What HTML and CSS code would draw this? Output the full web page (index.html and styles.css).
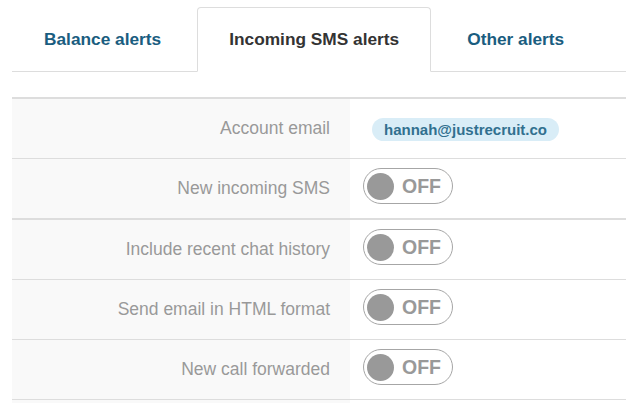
FILE: index.html
```html
<!DOCTYPE html>
<html>
<head>
<meta charset="utf-8">
<link rel="stylesheet" href="styles.css">
</head>
<body>
<div class="page">
  <ul class="tabs">
    <li class="tab"><a>Balance alerts</a></li>
    <li class="tab active"><a>Incoming SMS alerts</a></li>
    <li class="tab"><a>Other alerts</a></li>
  </ul>
  <table class="settings">
    <tbody>
      <tr>
        <th>Account email</th>
        <td><span class="badge">hannah@justrecruit.co</span></td>
      </tr>
      <tr>
        <th>New incoming SMS</th>
        <td><div class="toggle"><span class="knob"></span><span class="state">OFF</span></div></td>
      </tr>
    </tbody>
    <tbody>
      <tr>
        <th>Include recent chat history</th>
        <td><div class="toggle"><span class="knob"></span><span class="state">OFF</span></div></td>
      </tr>
      <tr>
        <th>Send email in HTML format</th>
        <td><div class="toggle"><span class="knob"></span><span class="state">OFF</span></div></td>
      </tr>
      <tr>
        <th>New call forwarded</th>
        <td><div class="toggle"><span class="knob"></span><span class="state">OFF</span></div></td>
      </tr>
      <tr class="more">
        <th></th>
        <td></td>
      </tr>
    </tbody>
  </table>
</div>
</body>
</html>
```
FILE: styles.css
```css
html, body {
  margin: 0;
  padding: 0;
  background: #fff;
  overflow: hidden;
}
body {
  font-family: "Liberation Sans", Arial, sans-serif;
  color: #333;
}
.page {
  padding-left: 12px;
  padding-top: 7px;
}
.tabs {
  list-style: none;
  margin: 0;
  padding: 0;
  display: flex;
  border-bottom: 1px solid #ddd;
}
.tab {
  margin-right: 4px;
  margin-bottom: -1px;
}
.tab a {
  display: block;
  height: 63px;
  line-height: 63px;
  padding: 0 31px;
  border: 1px solid transparent;
  border-radius: 4px 4px 0 0;
  font-size: 17.3px;
  font-weight: bold;
  color: #1a5d80;
}
.tab.active a {
  color: #333;
  background: #fff;
  border-color: #ddd;
  border-bottom-color: #fff;
}
.settings {
  margin-top: 25px;
  width: 614px;
  border-collapse: collapse;
  border-top: 2px solid #ddd;
}
.settings tbody + tbody {
  border-top: 2px solid #ddd;
}
.settings th,
.settings td {
  height: 59px;
  padding: 0;
  border-top: 1px solid #ddd;
  vertical-align: middle;
}
.settings tbody:first-child tr:first-child th,
.settings tbody:first-child tr:first-child td,
.settings tbody + tbody tr:first-child th,
.settings tbody + tbody tr:first-child td {
  border-top: none;
}
.settings th {
  width: 318px;
  padding-right: 20px;
  background: #f9f9f9;
  text-align: right;
  font-weight: normal;
  font-size: 17.5px;
  color: #999;
}
.settings td {
  padding-left: 13px;
}
.badge {
  display: inline-block;
  margin-left: 9px;
  margin-top: 2px;
  height: 23px;
  line-height: 23px;
  padding: 0 12px;
  border-radius: 12px;
  background: #d9edf7;
  color: #31708f;
  font-weight: bold;
  font-size: 15px;
}
.toggle {
  display: flex;
  align-items: center;
  box-sizing: border-box;
  width: 90px;
  height: 36px;
  border: 1px solid #a6a6a6;
  border-radius: 18px;
  padding-left: 3px;
  margin-bottom: 5px;
}
.knob {
  width: 27px;
  height: 27px;
  border-radius: 50%;
  background: #999;
}
.state {
  margin-left: 8px;
  font-size: 19.5px;
  font-weight: bold;
  color: #999;
}
```
